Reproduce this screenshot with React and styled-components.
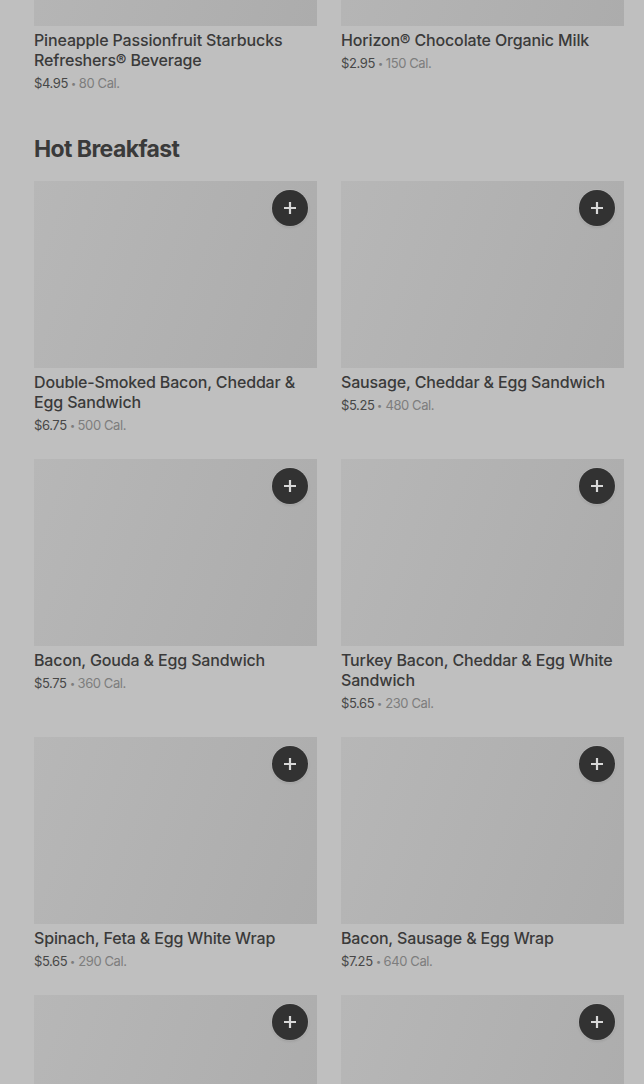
import React from 'react';
import styled, { createGlobalStyle } from 'styled-components';

const GlobalStyle = createGlobalStyle`
  html, body {
    margin: 0;
    padding: 0;
    background: #bfbfbf;
    overflow: hidden;
  }
  body {
    font-family: Inter, "Noto Sans", "Liberation Sans", sans-serif;
    color: #383838;
  }
`

const Page = styled.div`
  width: 644px;
  height: 1084px;
  overflow: hidden;
  background: #bfbfbf;
`

// the list is scrolled, so the first row of images is cut off at the top
const Scroller = styled.div`
  margin-top: -161px;
  padding: 0 20px 0 34px;
`

const Section = styled.section`
  margin-top: ${props => props.first ? '0' : '40px'};
`

const Heading = styled.h2`
  margin: 0 0 16px;
  font-size: 23px;
  line-height: 32px;
  font-weight: 700;
  letter-spacing: -0.6px;
  color: #3a3a3a;
`

const Grid = styled.div`
  display: grid;
  grid-template-columns: 283px 283px;
  column-gap: 24px;
  row-gap: 24px;
`

const Card = styled.div`
  display: flex;
  flex-direction: column;
`

const Thumb = styled.div`
  position: relative;
  height: 187px;
  background: linear-gradient(110deg, #b7b7b7 0%, #b2b2b2 45%, #acacac 100%);
`

const AddButton = styled.button`
  position: absolute;
  top: 9px;
  right: 9px;
  width: 36px;
  height: 36px;
  border: none;
  border-radius: 50%;
  background: #323232;
  box-shadow: 0 0 0 1px rgba(255,255,255,0.12), 0 1px 3px rgba(0,0,0,0.15);
  display: flex;
  align-items: center;
  justify-content: center;
  padding: 0;
  cursor: pointer;
`

const Name = styled.div`
  margin-top: 4px;
  font-size: 16px;
  line-height: 20px;
  font-weight: 500;
  letter-spacing: -0.15px;
  color: #3a3a3a;
`

const Meta = styled.div`
  margin-top: 3px;
  height: 20px;
  font-size: 13px;
  line-height: 20px;
  letter-spacing: -0.4px;
  color: #474747;
`

const Cal = styled.span`
  color: #7d7d7d;
`

const Dot = styled.span`
  display: inline-block;
  margin: 0 2px;
  color: #7d7d7d;
  transform: scale(0.7);
`

function Plus() {
  return (
    <svg width="12" height="12" viewBox="0 0 12 12">
      <path d="M6 1v10M1 6h10" stroke="#d8d8d8" strokeWidth="2.2" strokeLinecap="square" />
    </svg>
  )
}

function Item({ name, price, cal, plus }) {
  return (
    <Card>
      <Thumb>
        {plus && <AddButton aria-label="Add"><Plus /></AddButton>}
      </Thumb>
      <Name>{name}</Name>
      <Meta>{price}<Dot>•</Dot><Cal>{cal} Cal.</Cal></Meta>
    </Card>
  )
}

const drinks = [
  { name: 'Pineapple Passionfruit Starbucks Refreshers® Beverage', price: '$4.95', cal: 80 },
  { name: 'Horizon® Chocolate Organic Milk', price: '$2.95', cal: 150 },
]

const breakfast = [
  { name: 'Double-Smoked Bacon, Cheddar & Egg Sandwich', price: '$6.75', cal: 500 },
  { name: 'Sausage, Cheddar & Egg Sandwich', price: '$5.25', cal: 480 },
  { name: 'Bacon, Gouda & Egg Sandwich', price: '$5.75', cal: 360 },
  { name: 'Turkey Bacon, Cheddar & Egg White Sandwich', price: '$5.65', cal: 230 },
  { name: 'Spinach, Feta & Egg White Wrap', price: '$5.65', cal: 290 },
  { name: 'Bacon, Sausage & Egg Wrap', price: '$7.25', cal: 640 },
  { name: 'Impossible™ Breakfast Sandwich', price: '$6.45', cal: 420 },
  { name: 'Potato, Cheddar & Chive Bakes', price: '$4.25', cal: 330 },
]

export default function App() {
  return (
    <Page>
      <GlobalStyle />
      <Scroller>
        <Section first>
          <Grid>
            {drinks.map(d => <Item key={d.name} {...d} />)}
          </Grid>
        </Section>
        <Section>
          <Heading>Hot Breakfast</Heading>
          <Grid>
            {breakfast.map(d => <Item key={d.name} plus {...d} />)}
          </Grid>
        </Section>
      </Scroller>
    </Page>
  )
}
